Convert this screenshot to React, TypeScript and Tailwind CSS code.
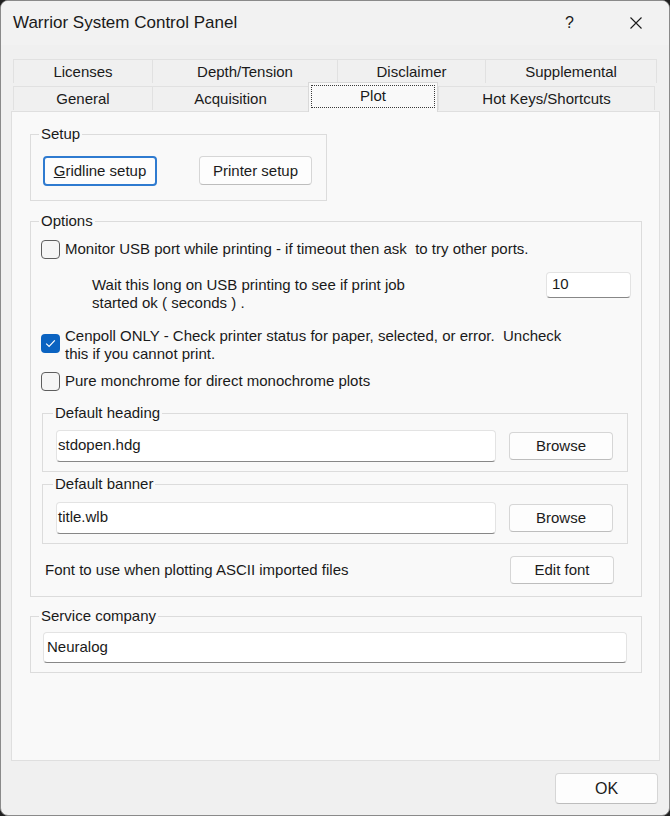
import React from "react";

const FONT = "font-['Liberation_Sans',Arial,sans-serif]";

function Btn({
  children,
  className = "",
  focused = false,
}: {
  children: React.ReactNode;
  className?: string;
  focused?: boolean;
}) {
  return (
    <button
      type="button"
      className={`flex items-center justify-center rounded-[4px] bg-[#fdfdfd] text-[15px] leading-[18px] text-[#1b1b1b] ${
        focused
          ? "border-2 border-[#2f7bd0]"
          : "border border-[#d6d6d6] border-b-[#bdbdbd]"
      } ${className}`}
    >
      {children}
    </button>
  );
}

function Check({ checked = false, className = "" }: { checked?: boolean; className?: string }) {
  if (checked) {
    return (
      <span
        className={`flex h-[19px] w-[19px] shrink-0 items-center justify-center rounded-[4px] bg-[#0b63c1] ${className}`}
      >
        <svg width="11" height="9" viewBox="0 0 11 9">
          <path d="M1.2 4.6 L4.1 7.4 L9.8 1.4" stroke="#ffffff" strokeWidth="1.2" fill="none" />
        </svg>
      </span>
    );
  }
  return (
    <span
      className={`block h-[19px] w-[19px] shrink-0 rounded-[4px] border border-[#5e5e5e] bg-[#f5f5f5] ${className}`}
    />
  );
}

function TextBox({
  value,
  className = "",
  pad = "pl-[3px]",
}: {
  value: string;
  className?: string;
  pad?: string;
}) {
  return (
    <div
      className={`flex items-center rounded-[4px] border border-[#e3e3e3] border-b-[#878787] bg-white text-[15px] leading-[18px] ${pad} ${className}`}
    >
      <span className="-mt-[2px]">{value}</span>
    </div>
  );
}

function Group({
  label,
  className = "",
  legendMl = "ml-[8px]",
  children,
}: {
  label: string;
  className?: string;
  legendMl?: string;
  children: React.ReactNode;
}) {
  return (
    <fieldset className={`border border-[#dcdcdc] ${className}`}>
      <legend className={`${legendMl} px-[2px] text-[15px] leading-[18px]`}>{label}</legend>
      {children}
    </fieldset>
  );
}

function Tab({ label, w, last = false }: { label: string; w: string; last?: boolean }) {
  return (
    <div
      className={`${w} flex h-[24px] items-center justify-center border-l border-t border-[#e1e1e1] bg-[#f0f0f0] pt-[2px] text-[15px] ${
        last ? "border-r" : ""
      }`}
    >
      {label}
    </div>
  );
}

export default function App() {
  return (
    <div className={`h-[816px] w-[670px] bg-[#202020] ${FONT} text-[#1a1a1a]`}>
      <div className="flex h-[816px] w-[670px] flex-col overflow-hidden rounded-[8px] border border-[#8a8a8a] bg-[#f0f0f0]">
        {/* Title bar */}
        <div className="flex h-[44px] shrink-0 items-center bg-[#f2f2f2] pl-[12px]">
          <span className="text-[17px] leading-[20px]">Warrior System Control Panel</span>
          <span className="ml-auto text-[16px] leading-[20px]">?</span>
          <svg className="ml-[56px] mr-[27px]" width="12" height="12" viewBox="0 0 12 12">
            <path d="M0.5 0.5 L11.5 11.5 M11.5 0.5 L0.5 11.5" stroke="#1a1a1a" strokeWidth="1.1" fill="none" />
          </svg>
        </div>

        {/* Tabs + panel */}
        <div className="flex flex-col px-[10px] pt-[14px]">
          <div className="ml-[2px] flex">
            <Tab label="Licenses" w="w-[139px]" />
            <Tab label="Depth/Tension" w="w-[185px]" />
            <Tab label="Disclaimer" w="w-[148px]" />
            <Tab label="Supplemental" w="w-[172px]" last />
          </div>
          <div className="-mt-px ml-[2px] flex h-[29px] items-end">
            <div className="mb-[1px] flex">
              <Tab label="General" w="w-[139px]" />
              <Tab label="Acquisition" w="w-[156px]" />
            </div>
            <div className="relative z-10 -mb-px flex h-[30px] w-[130px] flex-col border border-b-0 border-[#d9d9d9] bg-[#f9f9f9] px-[2px] pt-[2px]">
              <div className="flex h-[23px] items-center justify-center border border-dotted border-[#3a3a3a] text-[15px]">
                <span className="-mt-[1px]">Plot</span>
              </div>
            </div>
            <div className="mb-[1px] flex">
              <Tab label="Hot Keys/Shortcuts" w="w-[217px]" last />
            </div>
          </div>

          {/* Panel */}
          <div className="h-[650px] w-[649px] border border-[#dfdfdf] bg-[#f9f9f9] pl-[18px] pt-[13px]">
            <Group label="Setup" className="w-[297px]">
              <div className="flex pb-[14px] pl-[12px] pt-[13px]">
                <Btn focused className="h-[30px] w-[114px]">
                  <span>
                    <span className="underline">G</span>ridline setup
                  </span>
                </Btn>
                <Btn className="ml-[42px] h-[29px] w-[113px]">Printer setup</Btn>
              </div>
            </Group>

            <Group label="Options" className="mt-[11px] w-[612px]">
              <div className="flex flex-col px-[10px] pb-[12px]">
                <div className="mt-[10px] flex h-[18px] items-center">
                  <Check />
                  <span className="ml-[5px] whitespace-pre text-[15px] leading-[18px]">
                    {"Monitor USB port while printing - if timeout then ask  to try other ports."}
                  </span>
                </div>

                <div className="mt-[14px] flex items-start">
                  <div className="ml-[51px] pt-[4px] text-[15px] leading-[18px]">
                    Wait this long on USB printing to see if print job
                    <br />
                    started ok ( seconds ) .
                  </div>
                  <TextBox value="10" pad="pl-[5px]" className="ml-auto h-[26px] w-[85px]" />
                </div>

                <div className="mt-[15px] flex items-start">
                  <Check checked className="mt-[7px]" />
                  <span className="ml-[5px] whitespace-pre text-[15px] leading-[18px]">
                    {"Cenpoll ONLY - Check printer status for paper, selected, or error.  Uncheck\nthis if you cannot print."}
                  </span>
                </div>

                <div className="mt-[9px] flex h-[18px] items-center">
                  <Check />
                  <span className="ml-[5px] text-[15px] leading-[18px]">
                    Pure monchrome for direct monochrome plots
                  </span>
                </div>

                <Group label="Default heading" legendMl="ml-[10px]" className="ml-[1px] mt-[14px] w-[586px]">
                  <div className="flex items-center pb-[9px] pl-[13px] pt-[8px]">
                    <TextBox value="stdopen.hdg" pad="pl-[1px]" className="h-[32px] w-[440px]" />
                    <Btn className="ml-[13px] h-[28px] w-[104px]">Browse</Btn>
                  </div>
                </Group>

                <Group label="Default banner" legendMl="ml-[10px]" className="ml-[1px] mt-[3px] w-[586px]">
                  <div className="flex items-center pb-[9px] pl-[13px] pt-[9px]">
                    <TextBox value="title.wlb" pad="pl-[1px]" className="h-[32px] w-[440px]" />
                    <Btn className="ml-[13px] h-[28px] w-[104px]">Browse</Btn>
                  </div>
                </Group>

                <div className="mt-[12px] flex items-center">
                  <span className="ml-[4px] text-[15px] leading-[18px]">
                    Font to use when plotting ASCII imported files
                  </span>
                  <Btn className="ml-auto mr-[17px] h-[28px] w-[104px]">Edit font</Btn>
                </div>
              </div>
            </Group>

            <Group label="Service company" className="mt-[10px] w-[612px]">
              <div className="pb-[9px] pl-[12px] pt-[7px]">
                <TextBox value="Neuralog" pad="pl-[3px]" className="h-[31px] w-[584px]" />
              </div>
            </Group>
          </div>
        </div>

        {/* Footer */}
        <div className="flex justify-end pr-[11px] pt-[12px]">
          <Btn className="h-[31px] w-[103px] text-[16px]">OK</Btn>
        </div>
      </div>
    </div>
  );
}
